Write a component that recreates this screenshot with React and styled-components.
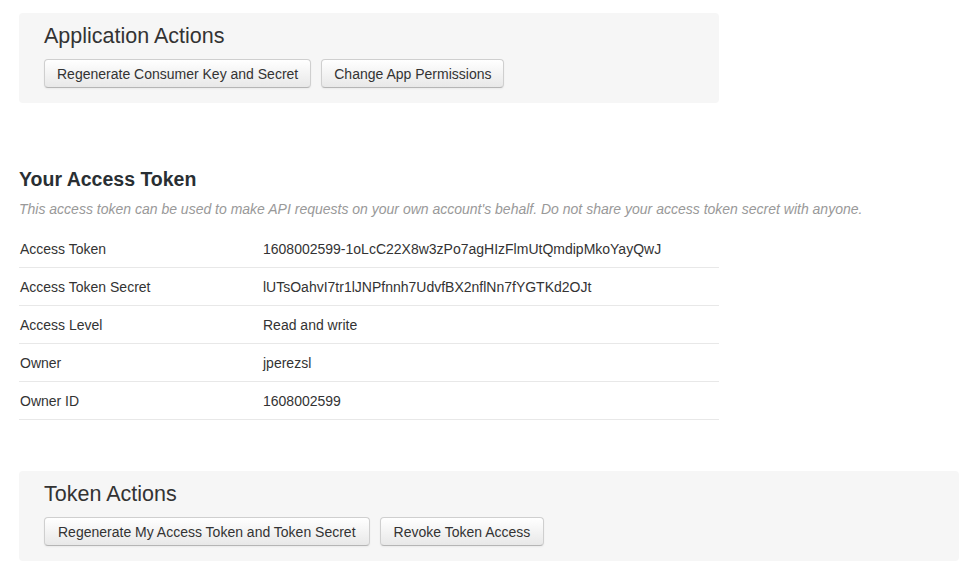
import React from 'react';
import styled, { createGlobalStyle } from 'styled-components';

const GlobalStyle = createGlobalStyle`
  body {
    margin: 0;
    background: #fff;
    font-family: "Liberation Sans", Arial, sans-serif;
    color: #333;
  }
`;

const Page = styled.div`
  width: 940px;
  padding: 13px 0 0 19px;
`;

const ActionBox = styled.div`
  width: ${props => props.wide ? '940px' : '700px'};
  box-sizing: border-box;
  height: 90px;
  background-color: #f6f6f6;
  border-radius: 4px;
  padding: 10px 25px 0;
`;

const BoxTitle = styled.h3`
  margin: 0;
  font-size: 21.5px;
  font-weight: normal;
  line-height: 26px;
  color: #333;
`;

const ButtonRow = styled.div`
  display: flex;
  gap: 10px;
  margin-top: 10px;
`;

const Button = styled.button`
  height: 29px;
  padding: 0 ${props => props.roomy ? '13px' : '12px'};
  font-family: "Liberation Sans", Arial, sans-serif;
  font-size: 14px;
  color: #333;
  background: linear-gradient(#ffffff, #e8e8e8);
  border: 1px solid #cfcfcf;
  border-bottom-color: #b5b5b5;
  border-radius: 4px;
  box-shadow: inset 0 1px 0 rgba(255, 255, 255, 0.3), 0 1px 2px rgba(0, 0, 0, 0.05);
  cursor: pointer;
`;

const Section = styled.div`
  margin-top: 63px;
  width: 700px;
`;

const Heading = styled.h2`
  margin: 0;
  font-size: 19.5px;
  font-weight: bold;
  line-height: 26px;
  color: #292f33;
`;

const Description = styled.p`
  margin: 8px 0 0;
  font-size: 14px;
  font-style: italic;
  color: #999;
  line-height: 18px;
  white-space: nowrap;
`;

const Table = styled.div`
  margin-top: 12px;
`;

const Row = styled.div`
  display: flex;
  align-items: center;
  height: 38px;
  box-sizing: border-box;
  border-bottom: 1px solid #e8e8e8;
  font-size: 14px;
  color: #333;
`;

const Label = styled.span`
  width: 243px;
  padding-left: 1px;
`;

const Value = styled.span`
  flex: 1;
`;

const BottomWrap = styled.div`
  margin-top: 51px;
`;

const rows = [
  ['Access Token', '1608002599-1oLcC22X8w3zPo7agHIzFlmUtQmdipMkoYayQwJ'],
  ['Access Token Secret', 'lUTsOahvI7tr1lJNPfnnh7UdvfBX2nflNn7fYGTKd2OJt'],
  ['Access Level', 'Read and write'],
  ['Owner', 'jperezsl'],
  ['Owner ID', '1608002599'],
];

const App = () => (
  <>
    <GlobalStyle />
    <Page>
      <ActionBox>
        <BoxTitle>Application Actions</BoxTitle>
        <ButtonRow>
          <Button>Regenerate Consumer Key and Secret</Button>
          <Button>Change App Permissions</Button>
        </ButtonRow>
      </ActionBox>

      <Section>
        <Heading>Your Access Token</Heading>
        <Description>
          This access token can be used to make API requests on your own account's behalf. Do not share your access token secret with anyone.
        </Description>
        <Table>
          {rows.map(([label, value]) => (
            <Row key={label}>
              <Label>{label}</Label>
              <Value>{value}</Value>
            </Row>
          ))}
        </Table>
      </Section>

      <BottomWrap>
        <ActionBox wide>
          <BoxTitle>Token Actions</BoxTitle>
          <ButtonRow>
            <Button roomy>Regenerate My Access Token and Token Secret</Button>
            <Button roomy>Revoke Token Access</Button>
          </ButtonRow>
        </ActionBox>
      </BottomWrap>
    </Page>
  </>
);

export default App;
